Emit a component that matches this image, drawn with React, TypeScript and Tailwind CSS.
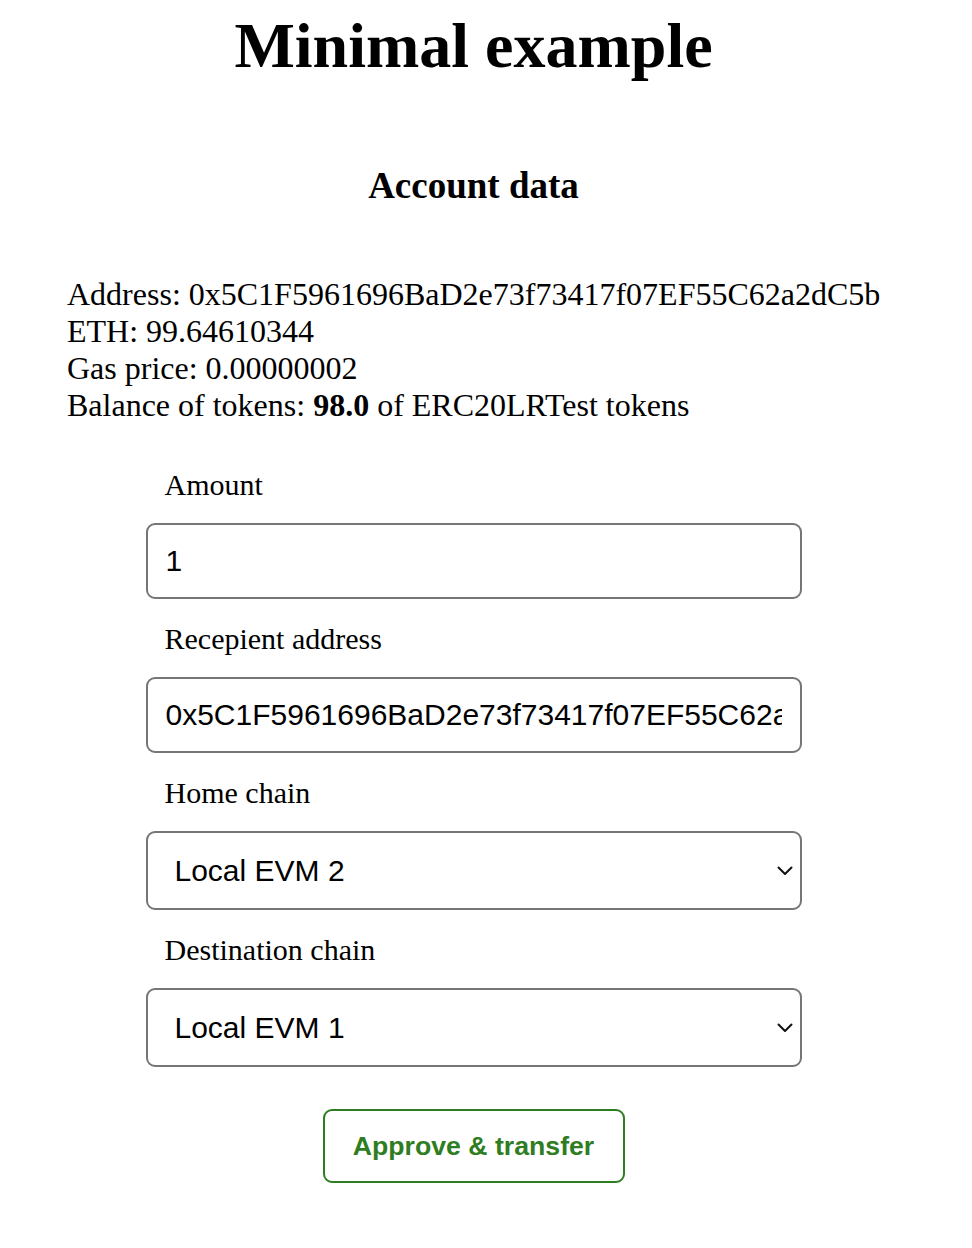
import { useState } from "react";

const serif = "font-['Liberation_Serif','Times_New_Roman',serif]";
const sans = "font-['Liberation_Sans',Arial,sans-serif]";

const address = "0x5C1F5961696BaD2e73f73417f07EF55C62a2dC5b";

function Chevron() {
  return (
    <svg
      className="pointer-events-none absolute right-[9px] top-1/2 -translate-y-1/2"
      width="16"
      height="10"
      viewBox="0 0 16 10"
      fill="none"
    >
      <path d="M1.5 1.5 8 8l6.5-6.5" stroke="#111" strokeWidth="2" strokeLinecap="round" strokeLinejoin="round" />
    </svg>
  );
}

function Field({ label, children }: { label: string; children: React.ReactNode }) {
  return (
    <div className="flex flex-col">
      <label className={`${serif} mt-[22px] pl-[19px] text-[30px] leading-[35px] text-black`}>{label}</label>
      <div className="relative mt-[21px]">{children}</div>
    </div>
  );
}

export default function App() {
  const [amount, setAmount] = useState("1");
  const [recipient, setRecipient] = useState(address);
  const [home, setHome] = useState("2");
  const [dest, setDest] = useState("1");

  const inputCls = `${sans} block h-[76px] w-full rounded-[9px] border-2 border-[#767676] bg-white px-[18px] text-[30px] text-black outline-none`;
  const selectCls = `${sans} block h-[79px] w-full appearance-none rounded-[9px] border-2 border-[#767676] bg-white pl-[27px] pr-[40px] text-[30px] text-black outline-none`;

  return (
    <div className={`${serif} w-[947px] bg-white text-black`}>
      <h1 className="mt-[9px] text-center text-[64px] font-bold leading-[74px]">Minimal example</h1>
      <h3 className="mt-[81px] text-center text-[37px] font-bold leading-[43px]">Account data</h3>

      <div className="mt-[69px] pl-[67px] text-[32px] leading-[37px]">
        <div>Address: {address}</div>
        <div>ETH: 99.64610344</div>
        <div>Gas price: 0.00000002</div>
        <div>
          Balance of tokens: <b>98.0</b> of ERC20LRTest tokens
        </div>
      </div>

      <div className="mx-auto mt-[21px] flex w-[656px] flex-col">
        <Field label="Amount">
          <input value={amount} onChange={(e) => setAmount(e.target.value)} className={inputCls} />
        </Field>
        <Field label="Recepient address">
          <input value={recipient} onChange={(e) => setRecipient(e.target.value)} className={inputCls} />
        </Field>
        <Field label="Home chain">
          <select value={home} onChange={(e) => setHome(e.target.value)} className={selectCls}>
            <option value="1">Local EVM 1</option>
            <option value="2">Local EVM 2</option>
          </select>
          <Chevron />
        </Field>
        <Field label="Destination chain">
          <select value={dest} onChange={(e) => setDest(e.target.value)} className={selectCls}>
            <option value="1">Local EVM 1</option>
            <option value="2">Local EVM 2</option>
          </select>
          <Chevron />
        </Field>

        <div className="mt-[42px] flex justify-center pb-[60px]">
          <button
            className={`${sans} h-[74px] w-[302px] rounded-[9px] border-2 border-[#2f7d22] bg-white text-[26.67px] font-bold text-[#2f7d22]`}
          >
            Approve &amp; transfer
          </button>
        </div>
      </div>
    </div>
  );
}
